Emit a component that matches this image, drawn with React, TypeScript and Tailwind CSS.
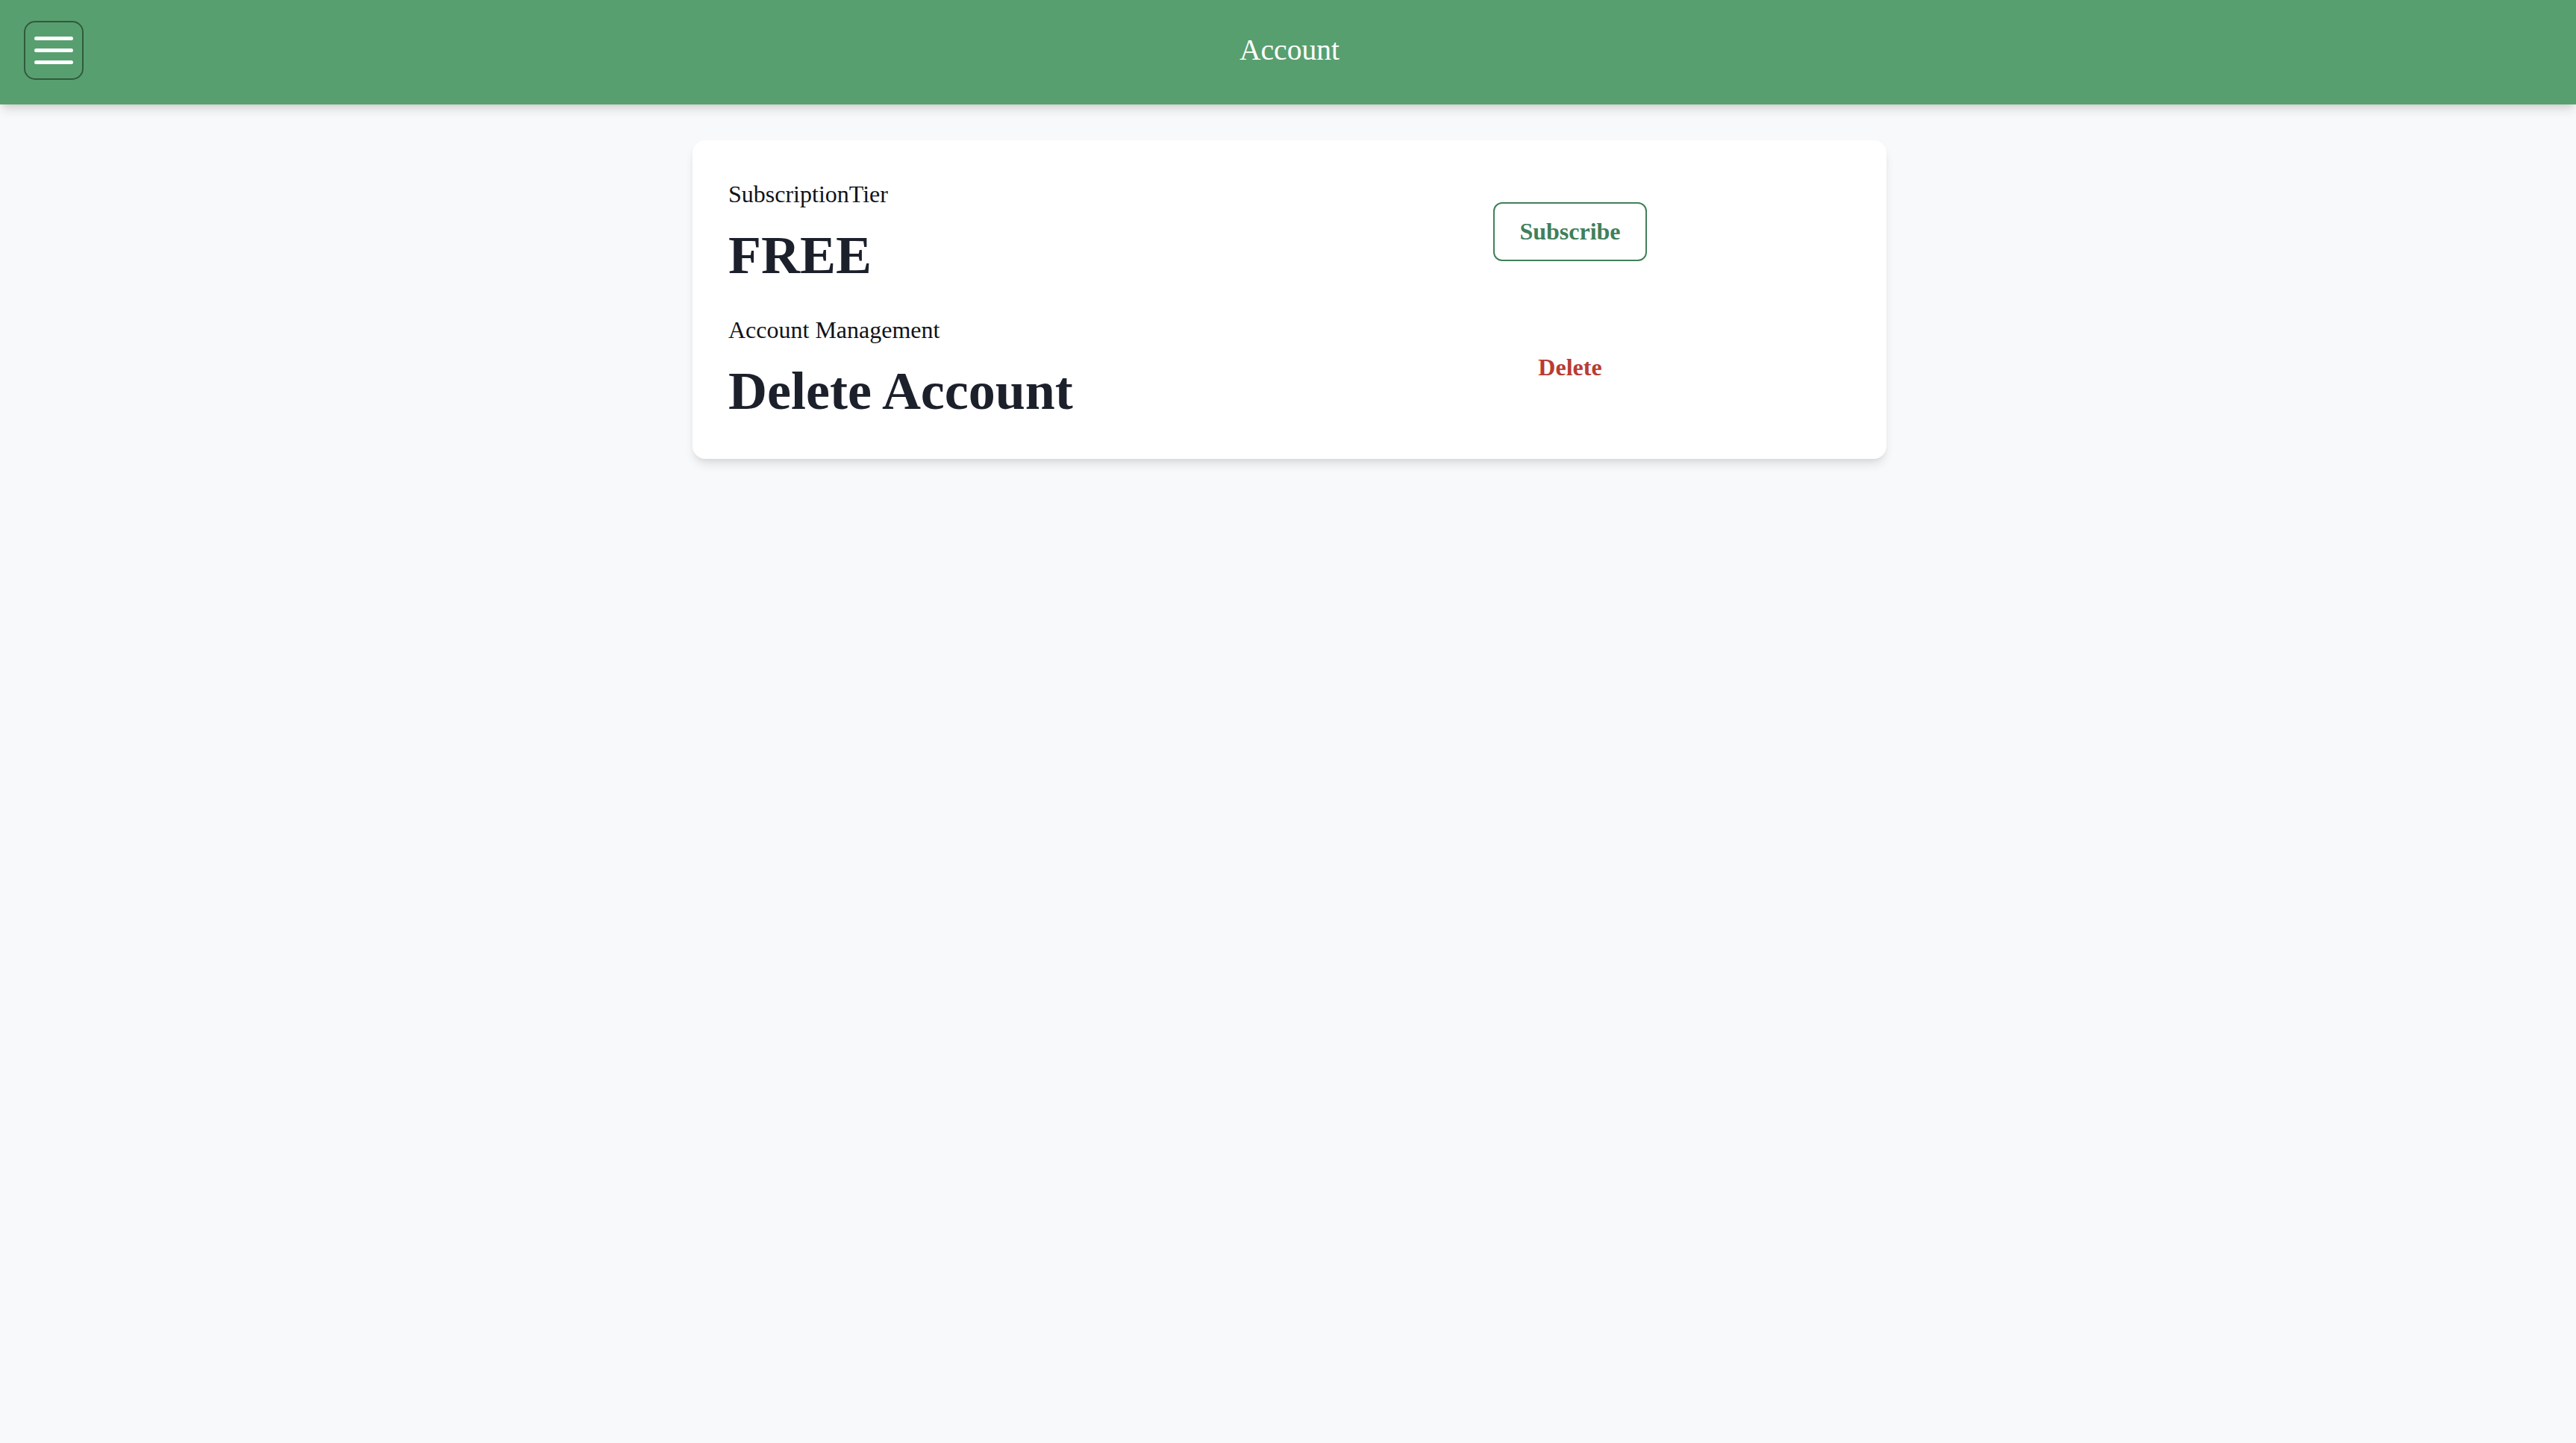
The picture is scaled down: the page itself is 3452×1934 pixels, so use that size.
export default function App() {
  return (
    <div className="min-h-screen bg-[#f8f9fa] font-['Liberation_Serif',_'Times_New_Roman',_serif]">
      <header className="h-[140px] bg-[#589f6f] shadow-[0_9px_13px_-2px_rgba(0,0,0,0.12),0_4px_9px_-4px_rgba(0,0,0,0.1)] grid grid-cols-[1fr_auto_1fr] items-center px-[32px] pb-[5px]">
        <button className="w-[80px] h-[79px] rounded-[15px] border-2 border-[#2f5b3c] flex flex-col items-center justify-center gap-[11px]">
          <span className="block w-[52px] h-[5px] rounded-full bg-white" />
          <span className="block w-[52px] h-[5px] rounded-full bg-white" />
          <span className="block w-[52px] h-[5px] rounded-full bg-white" />
        </button>
        <h1 className="ml-[4px] text-[39.6px] leading-[55px] text-white">Account</h1>
        <div />
      </header>

      <main className="pt-[48px] pl-[4px] flex justify-center">
        <div className="w-[1600px] rounded-[17px] bg-white shadow-[0_9px_13px_-2px_rgba(0,0,0,0.1),0_4px_9px_-4px_rgba(0,0,0,0.08)] px-[48px] pt-[50px] pb-[51px] grid grid-cols-2 gap-y-[38px] items-center">
          <div>
            <div className="text-[32px] leading-[44px] text-[#111318]">SubscriptionTier</div>
            <div className="mt-[21px] text-[72px] leading-[79px] font-bold text-[#1c202b]">FREE</div>
          </div>
          <div className="justify-self-center">
            <button className="h-[79px] px-[33px] rounded-[12px] border-2 border-[#40805a] text-[32px] leading-[44px] font-bold text-[#40805a]">
              Subscribe
            </button>
          </div>

          <div>
            <div className="text-[32px] leading-[44px] text-[#111318]">Account Management</div>
            <div className="mt-[21px] text-[72px] leading-[79px] font-bold text-[#1c202b]">Delete Account</div>
          </div>
          <div className="justify-self-center">
            <button className="h-[79px] px-[33px] text-[32px] leading-[44px] font-bold text-[#b83c34]">
              Delete
            </button>
          </div>
        </div>
      </main>
    </div>
  );
}
